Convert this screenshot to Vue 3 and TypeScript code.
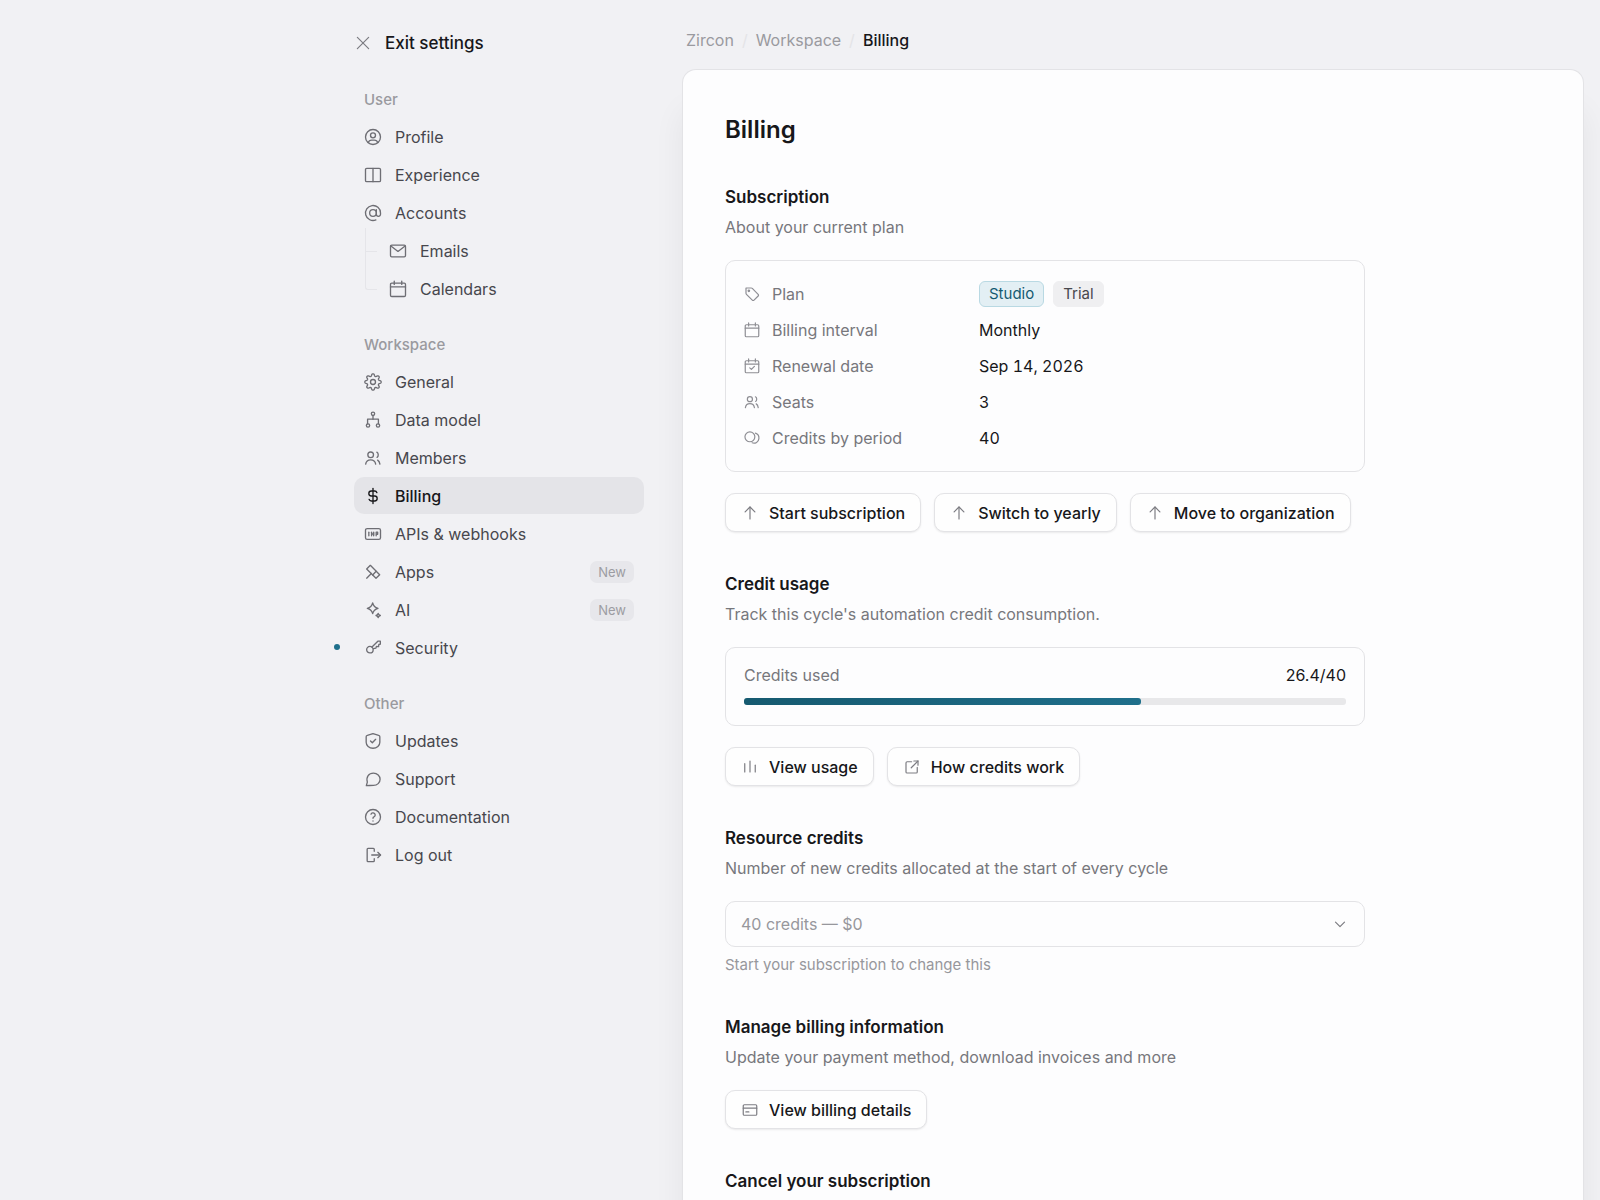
<script setup lang="ts">
import { h, ref, type FunctionalComponent } from 'vue'

interface NavItem {
  label: string
  icon: string
  badge?: string
  dot?: boolean
  active?: boolean
  children?: NavItem[]
}

interface NavGroup {
  title: string
  items: NavItem[]
}

// Outline of a cog with eight rounded teeth, the first one pointing up.
function cogPath(): string {
  const steps = 128
  const points: string[] = []
  for (let i = 0; i < steps; i++) {
    const angle = (i / steps) * Math.PI * 2
    const radius = 8.5 + 1.4 * Math.tanh(1.6 * Math.cos(8 * angle))
    points.push(`${(12 + radius * Math.sin(angle)).toFixed(2)} ${(12 - radius * Math.cos(angle)).toFixed(2)}`)
  }
  return `M${points.join('L')}z`
}

const icons: Record<string, string[]> = {
  close: ['M4.5 4.5l15 15', 'M19.5 4.5l-15 15'],
  profile: [
    'M3 12a9 9 0 1 0 18 0a9 9 0 1 0 -18 0',
    'M9 10a3 3 0 1 0 6 0a3 3 0 1 0 -6 0',
    'M6.2 18.8a4.4 4.4 0 0 1 4.2 -3h3.2a4.4 4.4 0 0 1 4.2 3',
  ],
  columns: ['M4.5 4h15a1.5 1.5 0 0 1 1.5 1.5v13a1.5 1.5 0 0 1 -1.5 1.5h-15a1.5 1.5 0 0 1 -1.5 -1.5v-13a1.5 1.5 0 0 1 1.5 -1.5z', 'M12 4v16'],
  at: ['M8 12a4 4 0 1 0 8 0a4 4 0 1 0 -8 0', 'M16 8v5.5a2.5 2.5 0 0 0 5 0v-1.5a9 9 0 1 0 -5.5 8.3'],
  mail: ['M4.5 5h15a1.5 1.5 0 0 1 1.5 1.5v11a1.5 1.5 0 0 1 -1.5 1.5h-15a1.5 1.5 0 0 1 -1.5 -1.5v-11a1.5 1.5 0 0 1 1.5 -1.5z', 'M3.5 6l8.5 6.5l8.5 -6.5'],
  calendar: ['M4.5 5h15a1.5 1.5 0 0 1 1.5 1.5v13a1.5 1.5 0 0 1 -1.5 1.5h-15a1.5 1.5 0 0 1 -1.5 -1.5v-13a1.5 1.5 0 0 1 1.5 -1.5z', 'M3 9.5h18', 'M7.5 2.5v4', 'M16.5 2.5v4'],
  calendarCheck: ['M4.5 5h15a1.5 1.5 0 0 1 1.5 1.5v13a1.5 1.5 0 0 1 -1.5 1.5h-15a1.5 1.5 0 0 1 -1.5 -1.5v-13a1.5 1.5 0 0 1 1.5 -1.5z', 'M3 9.5h18', 'M7.5 2.5v4', 'M16.5 2.5v4', 'M9 14.5l2.2 2l4 -4'],
  settings: [cogPath(), 'M9 12a3 3 0 1 0 6 0a3 3 0 1 0 -6 0'],
  hierarchy: [
    'M10 4.6a2 2 0 1 0 4 0a2 2 0 1 0 -4 0',
    'M4 18.6a2 2 0 1 0 4 0a2 2 0 1 0 -4 0',
    'M16 18.6a2 2 0 1 0 4 0a2 2 0 1 0 -4 0',
    'M12 6.6v4.4',
    'M5.5 16.6v-5.6h13v5.6',
  ],
  users: [
    'M5.8 8.2a3.4 3.4 0 1 0 6.8 0a3.4 3.4 0 1 0 -6.8 0',
    'M3.2 19.4c.5 -3.2 2.7 -5.2 6 -5.2s5.5 2 6 5.2',
    'M16.6 5c2.2 1 2.2 5 .3 6.2',
    'M17.6 14.5c1.6 1 2.4 2.7 2.7 4.9',
  ],
  dollar: ['M16.7 8a3 3 0 0 0 -2.7 -2h-4a3 3 0 0 0 0 6h4a3 3 0 0 1 0 6h-4a3 3 0 0 1 -2.7 -2', 'M12 3v18'],
  api: [
    'M5 5.5h14a2 2 0 0 1 2 2v9a2 2 0 0 1 -2 2h-14a2 2 0 0 1 -2 -2v-9a2 2 0 0 1 2 -2z',
    'M7 9.8v4.4',
    'M10.3 14.2v-4.4',
    'M12.8 14.2v-4.4',
    'M10.3 12h2.5',
    'M15.8 14.2v-4.4h1.8v2.5h-1.8',
  ],
  apps: ['M8.8 4l11.2 11.2l-4.4 4.4l-11.2 -11.2z', 'M11.6 15.6l4.2 -4.4', 'M10 13.8l-5.6 5.6'],
  sparkles: [
    'M11.6 3.6c1 4 2.4 5.4 6.4 6.4c-4 1 -5.4 2.4 -6.4 6.4c-1 -4 -2.4 -5.4 -6.4 -6.4c4 -1 5.4 -2.4 6.4 -6.4z',
    'M18.2 16c.4 1.6 1 2.2 2.6 2.6c-1.6 .4 -2.2 1 -2.6 2.6c-.4 -1.6 -1 -2.2 -2.6 -2.6c1.6 -.4 2.2 -1 2.6 -2.6z',
  ],
  key: ['M4.4 14a3.9 3.9 0 1 0 7.8 0a3.9 3.9 0 1 0 -7.8 0', 'M10.8 10.8l7 -7h3v3.6l-1.8 .4l-.3 2.6l-2.6 -.2l-.6 2l-3 .6'],
  shield: ['M12 3.2l6.8 2a1.8 1.8 0 0 1 1.4 1.8v6.5c0 4 -3.5 7.2 -8.2 7.2s-8.2 -3.2 -8.2 -7.2v-6.5a1.8 1.8 0 0 1 1.4 -1.8z', 'M9 12l2.2 2.2l4 -4.2'],
  chat: ['M4 20l1.2 -4.2c-1.7 -6.3 1.8 -10.8 7.3 -10.8c4.7 0 8 3.2 8 7.3s-3.3 7.4 -8 7.4c-2.6 0 -5 .2 -8.5 .3z'],
  help: ['M3 12a9 9 0 1 0 18 0a9 9 0 1 0 -18 0', 'M12 16.8v.1', 'M12 13.5a1.5 1.5 0 0 1 1 -1.5a2.6 2.6 0 1 0 -3.4 -3.4'],
  logout: ['M13.5 7.5v-2.5a1 1 0 0 0 -1 -1h-6.5a1 1 0 0 0 -1 1v14a1 1 0 0 0 1 1h6.5a1 1 0 0 0 1 -1v-2.5', 'M10.5 12h10.5', 'M17.8 8.8l3.2 3.2l-3.2 3.2'],
  tag: [
    'M6.8 7.8a1 1 0 1 0 2 0a1 1 0 1 0 -2 0',
    'M4 4h7a2 2 0 0 1 1.4 .6l7.8 7.8a1.6 1.6 0 0 1 0 2.3l-5.5 5.5a1.6 1.6 0 0 1 -2.3 0l-7.8 -7.8a2 2 0 0 1 -.6 -1.4z',
  ],
  coins: ['M2.6 10.4a6.6 6.6 0 1 0 13.2 0a6.6 6.6 0 1 0 -13.2 0', 'M16.6 5.5c3 1 5 3.5 4.6 7.3c-.5 4.4 -4.8 7.2 -9 5.6'],
  arrowUp: ['M12 4v16', 'M5.5 10.5l6.5 -6.5l6.5 6.5'],
  bars: ['M5 7.5v11', 'M12 4v14.5', 'M19 9.5v9'],
  external: ['M11.5 5h-6a1.5 1.5 0 0 0 -1.5 1.5v12a1.5 1.5 0 0 0 1.5 1.5h12a1.5 1.5 0 0 0 1.5 -1.5v-6', 'M11 13l9 -9', 'M14.5 4h5.5v5.5'],
  card: ['M4.5 5h15a1.5 1.5 0 0 1 1.5 1.5v11a1.5 1.5 0 0 1 -1.5 1.5h-15a1.5 1.5 0 0 1 -1.5 -1.5v-11a1.5 1.5 0 0 1 1.5 -1.5z', 'M3 9.5h18', 'M6.5 14.5h4'],
  chevron: ['M6 9.5l6 6l6 -6'],
}

const Icon: FunctionalComponent<{ name: string }> = (props) =>
  h(
    'svg',
    {
      viewBox: '0 0 24 24',
      fill: 'none',
      stroke: 'currentColor',
      'stroke-width': 1.6,
      'stroke-linecap': 'round',
      'stroke-linejoin': 'round',
      'aria-hidden': 'true',
    },
    icons[props.name].map((d) => h('path', { d })),
  )
Icon.props = ['name']

const groups: NavGroup[] = [
  {
    title: 'User',
    items: [
      { label: 'Profile', icon: 'profile' },
      { label: 'Experience', icon: 'columns' },
      {
        label: 'Accounts',
        icon: 'at',
        children: [
          { label: 'Emails', icon: 'mail' },
          { label: 'Calendars', icon: 'calendar' },
        ],
      },
    ],
  },
  {
    title: 'Workspace',
    items: [
      { label: 'General', icon: 'settings' },
      { label: 'Data model', icon: 'hierarchy' },
      { label: 'Members', icon: 'users' },
      { label: 'Billing', icon: 'dollar', active: true },
      { label: 'APIs & webhooks', icon: 'api' },
      { label: 'Apps', icon: 'apps', badge: 'New' },
      { label: 'AI', icon: 'sparkles', badge: 'New' },
      { label: 'Security', icon: 'key', dot: true },
    ],
  },
  {
    title: 'Other',
    items: [
      { label: 'Updates', icon: 'shield' },
      { label: 'Support', icon: 'chat' },
      { label: 'Documentation', icon: 'help' },
      { label: 'Log out', icon: 'logout' },
    ],
  },
]

const details = [
  { label: 'Billing interval', icon: 'calendar', value: 'Monthly' },
  { label: 'Renewal date', icon: 'calendarCheck', value: 'Sep 14, 2026' },
  { label: 'Seats', icon: 'users', value: '3' },
  { label: 'Credits by period', icon: 'coins', value: '40' },
]

const planActions = ['Start subscription', 'Switch to yearly', 'Move to organization']
const used = ref(26.4)
const total = ref(40)
</script>

<template>
  <div class="app">
    <aside class="sidebar">
      <div class="sidebar-inner">
        <button type="button" class="exit"><Icon name="close" class="icon-sm" />Exit settings</button>
        <nav v-for="group in groups" :key="group.title" class="group" :aria-label="group.title">
          <h2 class="group-title">{{ group.title }}</h2>
          <ul class="list">
            <li v-for="item in group.items" :key="item.label" class="entry">
              <span v-if="item.dot" class="dot"></span>
              <a href="#" class="link" :class="{ active: item.active }">
                <Icon :name="item.icon" class="icon" />
                <span class="link-text">{{ item.label }}</span>
                <span v-if="item.badge" class="badge">{{ item.badge }}</span>
              </a>
              <ul v-if="item.children" class="list sublist">
                <li v-for="child in item.children" :key="child.label" class="subentry">
                  <a href="#" class="link"><Icon :name="child.icon" class="icon" />{{ child.label }}</a>
                </li>
              </ul>
            </li>
          </ul>
        </nav>
      </div>
    </aside>

    <main class="main">
      <nav class="crumbs" aria-label="Breadcrumb">
        <a href="#">Zircon</a><span class="slash">/</span><a href="#">Workspace</a><span class="slash">/</span><span class="current">Billing</span>
      </nav>

      <div class="panel">
        <h1 class="title">Billing</h1>

        <section class="section">
          <header>
            <h2 class="heading">Subscription</h2>
            <p class="desc">About your current plan</p>
          </header>
          <dl class="card plan">
            <div class="row">
              <dt><Icon name="tag" class="icon-sm" />Plan</dt>
              <dd><span class="chip studio">Studio</span><span class="chip">Trial</span></dd>
            </div>
            <div v-for="d in details" :key="d.label" class="row">
              <dt><Icon :name="d.icon" class="icon-sm" />{{ d.label }}</dt>
              <dd>{{ d.value }}</dd>
            </div>
          </dl>
          <div class="actions">
            <button v-for="a in planActions" :key="a" type="button" class="btn"><Icon name="arrowUp" class="icon-sm" />{{ a }}</button>
          </div>
        </section>

        <section class="section">
          <header>
            <h2 class="heading">Credit usage</h2>
            <p class="desc">Track this cycle's automation credit consumption.</p>
          </header>
          <div class="card usage">
            <div class="usage-row">
              <span id="credits-used" class="muted">Credits used</span>
              <span>{{ used }}/{{ total }}</span>
            </div>
            <div class="track" role="progressbar" aria-labelledby="credits-used" :aria-valuenow="used" :aria-valuemax="total">
              <div class="fill" :style="{ width: (used / total) * 100 + '%' }"></div>
            </div>
          </div>
          <div class="actions">
            <button type="button" class="btn"><Icon name="bars" class="icon-sm" />View usage</button>
            <button type="button" class="btn"><Icon name="external" class="icon-sm" />How credits work</button>
          </div>
        </section>

        <section class="section">
          <header>
            <h2 class="heading"><label for="credits">Resource credits</label></h2>
            <p class="desc">Number of new credits allocated at the start of every cycle</p>
          </header>
          <div>
            <div class="select-wrap">
              <select id="credits" class="select" disabled>
                <option>40 credits — $0</option>
              </select>
              <Icon name="chevron" class="icon-sm chevron" />
            </div>
            <p class="hint">Start your subscription to change this</p>
          </div>
        </section>

        <section class="section">
          <header>
            <h2 class="heading">Manage billing information</h2>
            <p class="desc">Update your payment method, download invoices and more</p>
          </header>
          <div class="actions">
            <button type="button" class="btn"><Icon name="card" class="icon-sm" />View billing details</button>
          </div>
        </section>

        <section class="section">
          <h2 class="heading">Cancel your subscription</h2>
        </section>
      </div>
    </main>
  </div>
</template>

<style>
body {
  background: #f1f1f4;
}
</style>

<style scoped>
.app {
  display: grid;
  grid-template-columns: minmax(340px, 31fr) minmax(0, 41fr);
  min-height: 100vh;
  padding-right: 16px;
  box-sizing: border-box;
  overflow: hidden;
  font-family: Inter, 'Liberation Sans', sans-serif;
  font-size: 16px;
  line-height: 24px;
  color: #17171a;
}
.app * {
  box-sizing: border-box;
}
h1,
h2,
p,
ul,
dl,
dd {
  margin: 0;
  padding: 0;
}
a {
  color: inherit;
  text-decoration: none;
}
button,
select {
  font: inherit;
  color: inherit;
}

/* Sidebar */
.sidebar {
  display: flex;
  justify-content: flex-end;
  padding: 31px 38px 40px 32px;
}
.sidebar-inner {
  width: 290px;
}
.exit {
  display: flex;
  align-items: center;
  gap: 13px;
  margin-bottom: 33px;
  padding: 0;
  border: 0;
  background: none;
  font-size: 17px;
  font-weight: 500;
}
.icon {
  flex: none;
  width: 20px;
  height: 20px;
  color: #6e6e74;
}
.icon-sm {
  flex: none;
  width: 18px;
  height: 18px;
  color: #7c7c82;
}
.group {
  margin-bottom: 26px;
}
.group-title {
  margin-bottom: 6px;
  padding-left: 10px;
  font-size: 15px;
  font-weight: 500;
  line-height: 24px;
  color: #9a9a9f;
}
.list {
  display: flex;
  flex-direction: column;
  gap: 1px;
  list-style: none;
}
.entry {
  position: relative;
}
.link {
  display: flex;
  align-items: center;
  gap: 12px;
  height: 37px;
  padding: 0 10px 0 9px;
  border-radius: 10px;
  color: #47474d;
}
.link.active {
  background: #e4e4e8;
  color: #17171a;
  font-weight: 500;
}
.link.active .icon {
  color: #17171a;
}
.link-text {
  flex: 1;
}
.badge {
  padding: 0 8px;
  border-radius: 7px;
  background: #e7e7eb;
  font-size: 13px;
  line-height: 22px;
  color: #9c9ca2;
}
.dot {
  position: absolute;
  top: 15px;
  left: -20px;
  width: 6px;
  height: 6px;
  border-radius: 50%;
  background: #1f6f8b;
}
.sublist {
  margin: 1px 0 0 11px;
}
.subentry {
  position: relative;
  padding-left: 14px;
}
.subentry::before {
  content: '';
  position: absolute;
  top: -4px;
  left: 0;
  width: 11px;
  height: 23px;
  border-left: 1px solid #e5e5e9;
  border-bottom: 1px solid #e5e5e9;
}
.subentry:last-child::before {
  top: -19px;
  height: 38px;
  border-bottom-left-radius: 3px;
}

/* Main column */
.main {
  display: flex;
  flex-direction: column;
}
.crumbs {
  display: flex;
  gap: 8px;
  padding: 28px 4px 17px;
  color: #9a9a9f;
}
.slash {
  color: #e4e4e7;
}
.current {
  font-weight: 500;
  color: #17171a;
}
.panel {
  flex: 1;
  padding: 44px 42px 0;
  border: 1px solid #e3e3e6;
  border-bottom: 0;
  border-radius: 14px 14px 0 0;
  background: #fdfdfe;
  box-shadow: 0 40px 32px rgba(0, 0, 0, 0.06);
}
.title {
  margin-bottom: 39px;
  font-size: 24px;
  font-weight: 600;
  line-height: 32px;
}
.section {
  display: flex;
  flex-direction: column;
  gap: 21px;
  max-width: 640px;
  margin-bottom: 40px;
}
.section:last-child {
  margin-bottom: 0;
}
.heading {
  font-size: 17px;
  font-weight: 600;
  line-height: 24px;
}
.desc {
  margin-top: 6px;
  color: #77777c;
}
.card {
  border: 1px solid #e3e3e6;
  border-radius: 10px;
}
.plan {
  display: flex;
  flex-direction: column;
  gap: 10px;
  padding: 20px 17px;
}
.row {
  display: flex;
  align-items: center;
  height: 26px;
}
dt {
  display: flex;
  flex: 0 0 236px;
  align-items: center;
  gap: 11px;
  color: #77777c;
}
dt .icon-sm {
  color: #8e8e94;
}
dd {
  display: flex;
  gap: 9px;
  font-variant-numeric: tabular-nums;
}
.chip {
  padding: 0 9px;
  border: 1px solid #efeff1;
  border-radius: 6px;
  background: #efeff1;
  font-size: 15px;
  line-height: 24px;
  color: #47474d;
}
.chip.studio {
  border-color: #b9d9e3;
  background: #e3eff4;
  color: #155a72;
}
.actions {
  display: flex;
  flex-wrap: wrap;
  gap: 13px;
}
.btn {
  display: flex;
  align-items: center;
  gap: 10px;
  height: 39px;
  padding: 0 15px;
  border: 1px solid #e3e3e6;
  border-radius: 10px;
  background: #fefefe;
  box-shadow: 0 1px 2px rgba(0, 0, 0, 0.08);
  font-weight: 500;
  white-space: nowrap;
}
.usage {
  display: flex;
  flex-direction: column;
  gap: 11px;
  padding: 15px 18px 20px;
}
.usage-row {
  display: flex;
  justify-content: space-between;
}
.muted {
  color: #77777c;
}
.track {
  height: 7px;
  border-radius: 3px;
  background: #e8e8ea;
}
.fill {
  height: 7px;
  border-radius: 3px;
  background: linear-gradient(90deg, #165a70, #1f6f8b);
}
.select-wrap {
  position: relative;
}
.select {
  display: block;
  width: 100%;
  height: 46px;
  padding: 0 15px;
  border: 1px solid #e3e3e6;
  border-radius: 10px;
  appearance: none;
  background: #fdfdfe;
  color: #97979c;
  opacity: 1;
}
.chevron {
  position: absolute;
  top: 14px;
  right: 16px;
}
.hint {
  margin-top: 8px;
  font-size: 15px;
  line-height: 20px;
  color: #97979c;
}
</style>
